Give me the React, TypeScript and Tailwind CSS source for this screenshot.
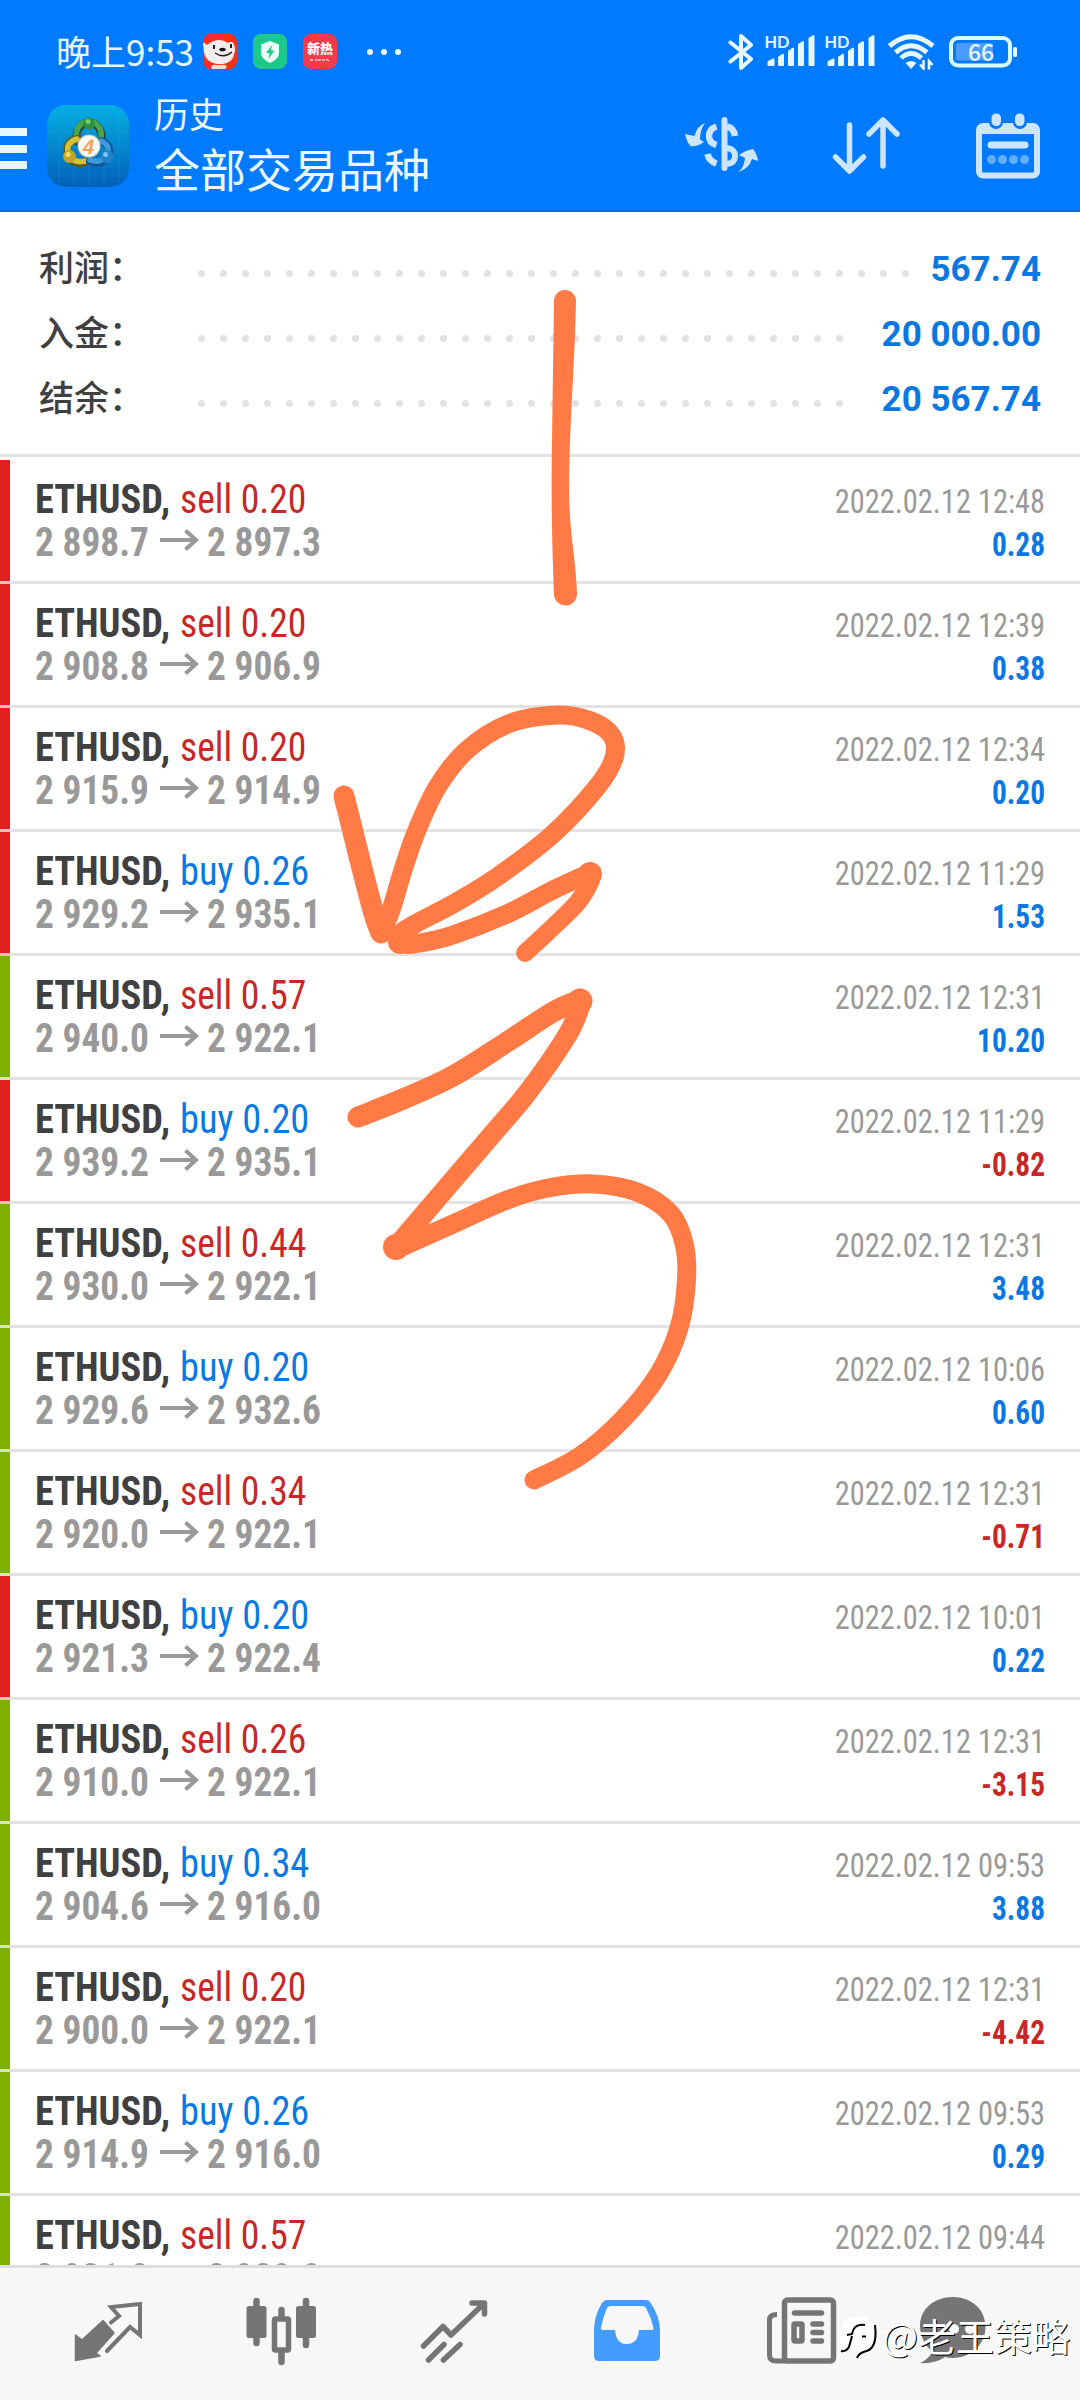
import React from 'react';

type Trade = {
  side: 'buy' | 'sell';
  volume: string;
  open: string;
  close: string;
  time: string;
  profit: string;
  bar: 'red' | 'green';
};

const trades: Trade[] = [
  { side: 'sell', volume: '0.20', open: '2 898.7', close: '2 897.3', time: '2022.02.12 12:48', profit: '0.28', bar: 'red' },
  { side: 'sell', volume: '0.20', open: '2 908.8', close: '2 906.9', time: '2022.02.12 12:39', profit: '0.38', bar: 'red' },
  { side: 'sell', volume: '0.20', open: '2 915.9', close: '2 914.9', time: '2022.02.12 12:34', profit: '0.20', bar: 'red' },
  { side: 'buy', volume: '0.26', open: '2 929.2', close: '2 935.1', time: '2022.02.12 11:29', profit: '1.53', bar: 'red' },
  { side: 'sell', volume: '0.57', open: '2 940.0', close: '2 922.1', time: '2022.02.12 12:31', profit: '10.20', bar: 'green' },
  { side: 'buy', volume: '0.20', open: '2 939.2', close: '2 935.1', time: '2022.02.12 11:29', profit: '-0.82', bar: 'red' },
  { side: 'sell', volume: '0.44', open: '2 930.0', close: '2 922.1', time: '2022.02.12 12:31', profit: '3.48', bar: 'green' },
  { side: 'buy', volume: '0.20', open: '2 929.6', close: '2 932.6', time: '2022.02.12 10:06', profit: '0.60', bar: 'green' },
  { side: 'sell', volume: '0.34', open: '2 920.0', close: '2 922.1', time: '2022.02.12 12:31', profit: '-0.71', bar: 'green' },
  { side: 'buy', volume: '0.20', open: '2 921.3', close: '2 922.4', time: '2022.02.12 10:01', profit: '0.22', bar: 'red' },
  { side: 'sell', volume: '0.26', open: '2 910.0', close: '2 922.1', time: '2022.02.12 12:31', profit: '-3.15', bar: 'green' },
  { side: 'buy', volume: '0.34', open: '2 904.6', close: '2 916.0', time: '2022.02.12 09:53', profit: '3.88', bar: 'green' },
  { side: 'sell', volume: '0.20', open: '2 900.0', close: '2 922.1', time: '2022.02.12 12:31', profit: '-4.42', bar: 'green' },
  { side: 'buy', volume: '0.26', open: '2 914.9', close: '2 916.0', time: '2022.02.12 09:53', profit: '0.29', bar: 'green' },
  { side: 'sell', volume: '0.57', open: '2 931.0', close: '2 929.9', time: '2022.02.12 09:44', profit: '0.63', bar: 'green' },
];

const summary = [
  { label: '利润：', value: '567.74', dots: 33 },
  { label: '入金：', value: '20 000.00', dots: 30 },
  { label: '结余：', value: '20 567.74', dots: 30 },
];

type Point = [number, number];

// Catmull-Rom spline through the points, as cubic bezier segments
function smooth(points: Point[]) {
  let d = `M${points[0][0]} ${points[0][1]}`;
  for (let i = 0; i < points.length - 1; i++) {
    const p0 = points[Math.max(i - 1, 0)];
    const p1 = points[i];
    const p2 = points[i + 1];
    const p3 = points[Math.min(i + 2, points.length - 1)];
    d += ` C${p1[0] + (p2[0] - p0[0]) / 6} ${p1[1] + (p2[1] - p0[1]) / 6}`;
    d += ` ${p2[0] - (p3[0] - p1[0]) / 6} ${p2[1] - (p3[1] - p1[1]) / 6}`;
    d += ` ${p2[0]} ${p2[1]}`;
  }
  return d;
}

const penStrokes: { width: number; points: Point[] }[] = [
  { width: 21, points: [[344, 796], [354, 836], [366, 884], [375, 917], [381, 933]] },
  { width: 19, points: [[381, 933], [391, 910], [403, 870], [417, 830], [438, 786], [467, 750], [508, 724], [557, 715], [591, 721], [612, 736], [614, 758], [597, 787], [553, 834], [497, 877], [453, 904], [415, 924], [398, 936], [404, 944], [420, 943], [453, 935], [507, 914], [553, 890], [590, 873]] },
  { width: 18, points: [[590, 873], [591, 880], [578, 902], [553, 927], [525, 953]] },
  { width: 21, points: [[358, 1117], [403, 1099], [453, 1076], [507, 1042], [553, 1012], [580, 1000]] },
  { width: 20, points: [[582, 1001], [568, 1034], [528, 1092], [490, 1137], [430, 1207], [395, 1248]] },
  { width: 19, points: [[397, 1249], [453, 1224], [507, 1200], [548, 1188], [593, 1184], [637, 1192], [670, 1213], [684, 1243], [686.5, 1280], [679, 1328], [658, 1375], [622, 1420], [580, 1456], [534, 1480]] },
];

function PenMarks() {
  return (
    <svg className="pointer-events-none absolute top-0 left-0" width="1080" height="2400" viewBox="0 0 1080 2400" fill="none">
      <g fill="#ff7a45">
        <path d="M554 301a11 11 0 0 1 22 0C575 360 569 430 569 490C569 530 576 560 577 593a11.500 11.500 0 0 1-23 2C552 540 551 500 552 440Z" />
        <circle cx="590" cy="874" r="12" />
        <circle cx="580" cy="1001" r="12.500" />
        <circle cx="396" cy="1247" r="13" />
        <circle cx="400" cy="942" r="12" />
      </g>
      {penStrokes.map((s, i) => (
        <path key={i} d={smooth(s.points)} stroke="#ff7a45" strokeWidth={s.width} strokeLinecap="round" strokeLinejoin="round" />
      ))}
    </svg>
  );
}

function SignalIcon() {
  return (
    <svg className="h-[36px] w-[52px] overflow-visible" viewBox="0 0 52 36" fill="#e6f7ff">
      <text x="-0.500" y="13.500" fontSize="17" fontWeight="700" fontFamily="Lato, sans-serif" textLength="25" lengthAdjust="spacingAndGlyphs">HD</text>
      <path d="M3 27l5-2.500q1.500-.5 1.500 1V31q0 1-1 1H3.500q-1 0-1-1V28.500Z" />
      <path d="M13 23l4-3q2-1 2 1V31q0 1-1 1H14q-1 0-1-1Z" />
      <path d="M23 17l4-3q2-1 2 1V31q0 1-1 1H24q-1 0-1-1Z" />
      <path d="M33 10l4-2.500q2-1 2 1V31q0 1-1 1H34q-1 0-1-1Z" />
      <path d="M43.500 4l4-2.500q2-1 2 1V31q0 1-1 1H44.500q-1 0-1-1Z" />
    </svg>
  );
}

function StatusBar() {
  return (
    <div className="mb-[2px] flex h-[103px] items-center pl-[56px] text-[#e6f7ff]">
      <span className="-mt-[2px] text-[35px] leading-none">晚上9:53</span>
      <svg className="ml-[9px] h-[35px] w-[34px]" viewBox="0 0 34 35">
        <rect width="34" height="35" rx="8" fill="#f5301f" />
        <path d="M0 9Q1 8 4 11Q15 2 25 9Q29 6 31 10Q33 17 31 20Q30 28 20 30Q3 31 1 18Z" fill="#f3eeee" />
        <path d="M8 33q1-3 6-2h4q5-1 6 2l-2 2H9Z" fill="#eadfe0" />
        <path d="M11 11v4M28 10v4" stroke="#222" strokeWidth="2" />
        <ellipse cx="19.500" cy="15.500" rx="3.200" ry="1.800" fill="#111" />
        <path d="M12 19q9 6 17-1" stroke="#222" strokeWidth="1.500" fill="none" />
      </svg>
      <svg className="ml-[16px] h-[35px] w-[34px]" viewBox="0 0 34 35">
        <rect width="34" height="35" rx="8" fill="#1dc98a" />
        <path d="M17 7l9 3.500v8Q26 25 17 29Q8 25 8 18.500v-8Z" fill="#e9fff6" />
        <path d="M19 11l-6 8h3.500l-1 6l6-8.500H18Z" fill="#1dc98a" />
      </svg>
      <div className="ml-[16px] flex h-[35px] w-[34px] flex-col items-center rounded-[8px] bg-[#f53a4c] pt-[7px] text-white">
        <span className="text-[13px] leading-[14px] font-black">新热</span>
        <svg className="mt-[3px] h-[4px] w-[20px]" viewBox="0 0 20 4">
          <path d="M0 2h3M5 1l2 2M8 2h3M12 2h3M16 1l3 2" stroke="#ffc9ce" strokeWidth="1.500" />
        </svg>
      </div>
      <div className="ml-[30px] flex gap-[8px]">
        <span className="size-[6px] rounded-full bg-[#e6f7ff]" />
        <span className="size-[6px] rounded-full bg-[#e6f7ff]" />
        <span className="size-[6px] rounded-full bg-[#e6f7ff]" />
      </div>
      <div className="ml-auto flex items-center pr-[61px]">
        <svg className="h-[40px] w-[26px]" viewBox="0 0 26 40" fill="none" stroke="#e6f7ff" strokeWidth="4" strokeLinecap="round" strokeLinejoin="round">
          <path d="M2.500 10.500L23 27L13 36V4L23 13L2.500 29.500" />
        </svg>
        <div className="ml-[11px] flex gap-[8px]">
          <SignalIcon />
          <SignalIcon />
        </div>
        <svg className="ml-[11px] h-[36px] w-[47px]" viewBox="0 0 47 36" fill="none" stroke="#e6f7ff" strokeWidth="5">
          <path d="M1.500 12Q23 -6.500 45 12M7.500 18.500Q23 5 39 18.500M13 24Q23 15 33.500 24" />
          <path d="M17.500 29Q23 25 28.500 29L23 35Z" fill="#e6f7ff" stroke="none" />
          <path d="M35.500 26v8.500l-3.500-4M41 35.500V27l3.500 4" strokeWidth="2.500" />
        </svg>
        <svg className="ml-[14px] h-[32px] w-[70px] overflow-visible" viewBox="0 0 70 32" fill="none">
          <rect x="2" y="2" width="59" height="27.500" rx="7" stroke="#d9ffff" strokeWidth="4" />
          <rect x="7" y="7" width="37" height="17.500" rx="2" fill="#4b9bfd" />
          <rect x="64" y="11" width="4" height="10" rx="1.500" fill="#e6f7ff" />
          <text x="19" y="24.500" fontSize="23" fontWeight="500" fill="#e6f7ff">66</text>
        </svg>
      </div>
    </div>
  );
}

function AppLogo() {
  return (
    <svg className="ml-[20px] h-[82px] w-[82px]" viewBox="0 0 82 82">
      <defs>
        <linearGradient id="tile" x1="0" y1="0" x2="0" y2="1">
          <stop offset="0" stopColor="#04aee4" />
          <stop offset="0.5" stopColor="#0287cc" />
          <stop offset="1" stopColor="#0260b8" />
        </linearGradient>
      </defs>
      <rect width="82" height="82" rx="19" fill="url(#tile)" />
      <path d="M12 4v74M27 2v78M42 2v78M57 2v78M72 4v74M3 12h76M1 27h80M1 42h80M1 57h80M3 71h76" stroke="#4fc3f0" strokeOpacity="0.15" />
      <g fill="none" strokeLinecap="round">
        <path d="M31 37A12.500 13 0 1 1 53 37" stroke="#234d3d" strokeWidth="8" />
        <path d="M31 36A12.500 13 0 1 1 52.500 36" stroke="#4ca651" strokeWidth="5.500" />
        <path d="M31 34Q18 36 21 49Q25 61 39 57" stroke="#5b5a17" strokeWidth="8" />
        <path d="M30 34Q19 37 21 48Q25 59 38 56" stroke="#d3bf38" strokeWidth="5.500" />
        <path d="M54 36Q65 40 61 51Q54 61 43 56" stroke="#125392" strokeWidth="8" />
        <path d="M54 36Q64 40 60 50Q54 59 43 55" stroke="#3d9bdc" strokeWidth="5.500" />
      </g>
      <circle cx="42" cy="18.500" r="6" fill="#2b9140" />
      <circle cx="41" cy="16.500" r="2.500" fill="#79cb74" />
      <circle cx="22.500" cy="51.500" r="6.500" fill="#c5a622" />
      <circle cx="21" cy="49.500" r="2.500" fill="#ecdc6c" />
      <circle cx="60" cy="51.500" r="6.500" fill="#2381c8" />
      <circle cx="58.500" cy="49.500" r="2.500" fill="#77c4ec" />
      <circle cx="42" cy="41" r="11.500" fill="#c3cdc8" />
      <circle cx="42" cy="41" r="10.500" fill="#faf8f4" />
      <text x="41.500" y="48.500" textAnchor="middle" fontSize="20" fontWeight="700" fontStyle="italic" fontFamily="Liberation Sans" fill="#f3a055">4</text>
    </svg>
  );
}

function Header() {
  return (
    <header className="h-[212px] border-b-2 border-[#1b66c9] bg-[#007aff]">
      <StatusBar />
      <div className="flex h-[82px]">
        <div className="flex w-[27px] flex-col gap-[8.5px] pt-[23px]">
          <span className="h-[8px] bg-[#e6f7ff]" />
          <span className="h-[8px] bg-[#e6f7ff]" />
          <span className="h-[8px] bg-[#e6f7ff]" />
        </div>
        <AppLogo />
        <div className="-mt-[13px] ml-[25px] text-[#eaf9ff]">
          <div className="text-[35px] leading-[42px]">历史</div>
          <div className="text-[46px] leading-[66px]">全部交易品种</div>
        </div>
        <svg className="mt-[10px] ml-auto h-[60px] w-[76px]" viewBox="0 0 76 60" fill="none" stroke="#cde5ff" strokeLinecap="butt">
          <path d="M40.500 5V53" strokeWidth="6" strokeLinecap="round" />
          <path d="M43 11.500Q50 13 51 21M32.500 11.500Q25 14 25 21Q25 28 32.500 30M32.500 48.500Q25 46 23.500 39" strokeWidth="6.500" />
          <path d="M43 33Q51 34 51 41Q51 48 43 49" strokeWidth="6" />
          <path d="M21 8Q13 11 10.500 21L1 19Q3 28 7 31.500Q15 31 20 27L16 24.500Q16 15 21 8Z" fill="#cde5ff" stroke="none" />
          <path d="M54 57Q60 53 61 43L55 40Q62 35 69 34Q73 39 74 46L68 44Q65 54 54 57Z" fill="#cde5ff" stroke="none" />
        </svg>
        <svg className="mt-[10px] ml-[70px] h-[62px] w-[72px]" viewBox="0 0 72 62" fill="none" stroke="#cde5ff" strokeWidth="5.500" strokeLinecap="round" strokeLinejoin="round">
          <path d="M19.500 10V55M5.500 42L19.500 56L33.500 42" />
          <path d="M53 51V6M39 19L53 5L67 19" />
        </svg>
        <svg className="mt-[7px] mr-[39px] ml-[73px] h-[67px] w-[66px]" viewBox="0 0 66 67" fill="none">
          <rect x="4" y="14" width="58" height="49.500" rx="4" stroke="#cde5ff" strokeWidth="6" />
          <path d="M4 14h58v8H4Z" fill="#cde5ff" />
          <rect x="14" y="0" width="14" height="17" rx="7" fill="#007aff" />
          <rect x="38" y="0" width="14" height="17" rx="7" fill="#007aff" />
          <rect x="16.500" y="1.500" width="9.500" height="12.500" rx="4.500" fill="#cde5ff" />
          <rect x="40" y="1.500" width="9.500" height="12.500" rx="4.500" fill="#cde5ff" />
          <path d="M16 33h34" stroke="#cde5ff" strokeWidth="7" strokeLinecap="round" />
          <g fill="#63aeff">
            <circle cx="16.500" cy="47.500" r="4.500" />
            <circle cx="27.500" cy="47.500" r="4.500" />
            <circle cx="38.500" cy="47.500" r="4.500" />
            <circle cx="49.500" cy="47.500" r="4.500" />
          </g>
        </svg>
      </div>
    </header>
  );
}

function TradeRow({ trade }: { trade: Trade }) {
  const isRed = trade.bar === 'red';
  const loss = trade.profit.startsWith('-');

  return (
    <li className="flex h-[124px] shrink-0">
      <div className={`w-[10px] border-b-[3px] ${isRed ? 'border-[#f7b9b9] bg-[#e01f1f]' : 'border-[#d5e8ae] bg-[#7fb000]'}`} />
      <div className="flex flex-1 justify-between border-b-[3px] border-[#e3e3e3] pr-[35px] pl-[25px] [font-family:'Roboto_Condensed',Roboto,sans-serif] [font-stretch:75%]">
        <div className="pt-[18px] text-[40px] leading-[43px] whitespace-nowrap">
          <div className="flex">
            <span className="w-[145px] origin-left scale-x-[0.96] font-bold text-[#404040]">ETHUSD,</span>
            <span className={`origin-left ${trade.side === 'sell' ? 'scale-x-[0.94] text-[#c62828]' : 'scale-x-[0.96] text-[#0a7ae0]'}`}>
              {trade.side} {trade.volume}
            </span>
          </div>
          <div className="flex font-bold text-[#999999]">
            <span className="w-[124px] origin-left scale-x-[0.935]">{trade.open}</span>
            <svg className="mt-[8px] mr-[8px] h-[22px] w-[40px]" viewBox="0 0 40 22" fill="none" stroke="#999999" strokeWidth="4">
              <path d="M1 11H37M26.500 1.500L37 11L26.500 20.500" />
            </svg>
            <span className="origin-left scale-x-[0.935]">{trade.close}</span>
          </div>
        </div>
        <div className="pt-[20px] text-right text-[34px] leading-[43px] whitespace-nowrap">
          <div className="origin-right scale-x-[0.895] text-[#999999]">{trade.time}</div>
          <div className={`origin-right scale-x-[0.865] font-bold ${loss ? 'text-[#c62828]' : 'text-[#0a78e0]'}`}>{trade.profit}</div>
        </div>
      </div>
    </li>
  );
}

function BottomNav() {
  return (
    <nav className="relative flex h-[135px] shrink-0 border-t-[3px] border-[#dedede] bg-[#f7f7f7] pt-[27px] pl-[72px]">
      <svg className="h-[72px] w-[73px]" viewBox="0 0 73 72">
        <path d="M3.500 40L10 45L31 25.500L42 38L24 58L28 61L3.500 65.500Z" fill="#757575" stroke="#757575" strokeWidth="1.500" strokeLinejoin="round" />
        <path d="M39 27.500L47 21L39 12L68 9V40L58 32L35 56" fill="none" stroke="#757575" strokeWidth="4" strokeLinejoin="miter" strokeLinecap="round" />
      </svg>
      <svg className="ml-[100px] h-[72px] w-[73px]" viewBox="0 0 73 72">
        <path d="M11.500 6V48M61 6V50M36.500 15V67" stroke="#757575" strokeWidth="6.500" strokeLinecap="round" />
        <rect x="1.500" y="11" width="20" height="32" rx="2.500" fill="#757575" />
        <rect x="51" y="11" width="20" height="32" rx="2.500" fill="#757575" />
        <rect x="29.500" y="24" width="14" height="31" rx="1" fill="#f7f7f7" stroke="#757575" strokeWidth="5.500" />
      </svg>
      <svg className="ml-[99px] h-[72px] w-[73px]" viewBox="0 0 73 72" fill="none" stroke="#757575" strokeWidth="5.500" strokeLinecap="round" strokeLinejoin="round">
        <path d="M6.500 51L26 31.500L34 40L67 8.500M55 8H67.500V19M11.500 65L27 49.500M26.500 65L43 49.500" />
      </svg>
      <svg className="ml-[102px] h-[72px] w-[73px]" viewBox="0 0 73 72">
        <path d="M12 6Q13 5 15 5H54Q57 5 58 7Q68 21 68 36V61Q68 66 63 66H7Q2 66 2 61V36Q2 21 10 8Z" fill="#429dfe" />
        <path d="M19 11H50Q53 11 54 13Q59 22 61.500 33Q62 35 60 35H47Q46 49 34.500 49Q24 49 23 35H11Q8 35 9 32Q11 22 15 13Q16 11 19 11Z" fill="#f7f7f7" />
      </svg>
      <svg className="ml-[101px] h-[72px] w-[73px]" viewBox="0 0 73 72" fill="none" stroke="#757575">
        <rect x="18.500" y="5" width="49" height="61" rx="3" strokeWidth="5.500" />
        <path d="M11 19.500Q3.500 19.500 3.500 25V60Q3.500 66 10 66H22" strokeWidth="5" />
        <path d="M28.500 18H55.500M47 29H55.500M47 37.500H55.500M47 46H55.500" strokeWidth="5.500" strokeLinecap="round" />
        <rect x="28" y="29" width="8" height="17" rx="1" strokeWidth="5.500" />
      </svg>
      <svg className="ml-[79px] h-[72px] w-[73px]" viewBox="0 0 73 72">
        <path d="M35 2C16 2 2 14 2 31C2 42 8 51 14 57Q11 64 2 68Q17 69 27 62Q30 63 35 63C53 63 67.500 49 67.500 32C67.500 14 53 2 35 2Z" fill="#757575" />
        <circle cx="36" cy="34" r="5" fill="#f7f7f7" />
        <circle cx="52" cy="34" r="5" fill="#f7f7f7" />
      </svg>
      <div className="absolute top-[40px] left-[838px] flex items-center">
        <svg className="mt-[8px] h-[46px] w-[44px]" viewBox="0 0 44 46" fill="none">
          <path d="M2 20Q2 1 18 1H24Q38 2 38 20Q38 36 25 38L19 43V35H6Q1 32 2 20Z" fill="#fff" />
          <path d="M27 9Q16 7 14 18L9 19M14 20L11 31Q8 36 3 35M24 20.500H28M37 9Q40 33 27 35.500Q21 37 19 42" stroke="#000" strokeWidth="2" />
        </svg>
        <span className="text-[38px] leading-[48px] text-white [text-shadow:1px_1px_0.5px_#000]">@老王策略</span>
      </div>
    </nav>
  );
}

export default function App() {
  return (
    <div className="relative flex h-[2400px] w-[1080px] flex-col overflow-hidden bg-white [font-family:'Noto_Sans_CJK_SC',sans-serif]">
      <Header />

      {/* Account summary */}
      <section className="h-[245px] border-b-[3px] border-[#e3e3e3] pt-[24px]">
        {summary.map((item) => (
          <div key={item.label} className="flex h-[65px] items-center justify-between pr-[39px] pl-[39px]">
            <span className="w-[159px] -translate-y-[2px] text-[35px] font-medium text-[#404040]">{item.label}</span>
            <span className="mt-[9px] mr-auto flex gap-[15px]">
              {Array.from({ length: item.dots }, (_, i) => (
                <span key={i} className="size-[7px] rounded-full bg-[#e2e2e2]" />
              ))}
            </span>
            <span className="mt-[3px] [font-family:Roboto,sans-serif] text-[35px] font-bold text-[#0a78e0]">{item.value}</span>
          </div>
        ))}
      </section>

      {/* Closed trades */}
      <ul className="flex min-h-0 flex-1 flex-col overflow-hidden pt-[3px]">
        {trades.map((trade, i) => (
          <TradeRow key={i} trade={trade} />
        ))}
      </ul>

      <BottomNav />
      <PenMarks />
    </div>
  );
}
